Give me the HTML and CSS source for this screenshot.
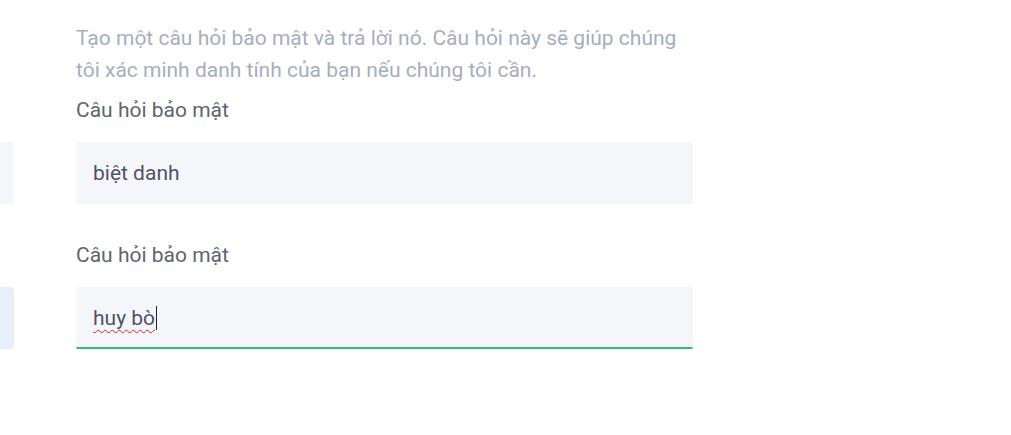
FILE: index.html
```html
<!DOCTYPE html>
<html lang="vi">
<head>
<meta charset="utf-8">
<link rel="stylesheet" href="styles.css">
</head>
<body>
<div class="form">
  <p class="desc">Tạo một câu hỏi bảo mật và trả lời nó. Câu hỏi này sẽ giúp chúng tôi xác minh danh tính của bạn nếu chúng tôi cần.</p>
  <label class="label first">Câu hỏi bảo mật</label>
  <div class="stub"></div>
  <div class="field"><span class="value">biệt danh</span></div>
  <label class="label second">Câu hỏi bảo mật</label>
  <div class="stub active"></div>
  <div class="field focused"><span class="value misspelled">huy bò</span><span class="caret"></span></div>
</div>
</body>
</html>
```

FILE: styles.css
```css
html, body {
  margin: 0;
  padding: 0;
  background: #ffffff;
}
body {
  font-family: Roboto, "Noto Sans", sans-serif;
  width: 1011px;
  height: 435px;
  overflow: hidden;
}
.form {
  display: grid;
  grid-template-columns: 14px 617px;
  column-gap: 62px;
  padding-top: 22px;
}
.desc {
  grid-column: 2;
  margin: 0;
  font-size: 21px;
  line-height: 32px;
  color: #a7aebd;
}
.label {
  grid-column: 2;
  display: block;
  font-size: 21px;
  line-height: 32px;
  color: #5f6470;
  margin-bottom: 16px;
}
.label.first { margin-top: 8px; }
.label.second { margin-top: 35px; }
.stub {
  grid-column: 1;
  height: 62px;
  background: #f5f6fa;
  border-radius: 0 3px 3px 0;
}
.stub.active { background: #e8effb; }
.field {
  grid-column: 2;
  height: 62px;
  box-sizing: border-box;
  background: #f5f6fa;
  border-radius: 2px;
  padding-left: 17px;
  display: flex;
  align-items: center;
  font-size: 21px;
  color: #4d5466;
}
.field.focused {
  border-bottom: 2px solid #2fbd6f;
  padding-top: 2px;
}
.misspelled {
  text-decoration: underline wavy #e02020;
  text-decoration-thickness: 1.3px;
  text-underline-offset: 4px;
}
.caret {
  display: inline-block;
  width: 1px;
  height: 24px;
  background: #222;
  margin-left: 1px;
}
```
